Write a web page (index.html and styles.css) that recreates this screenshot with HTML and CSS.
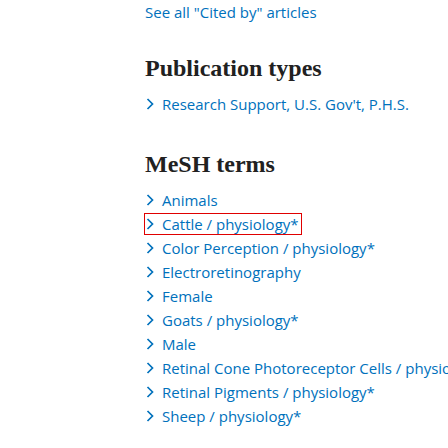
FILE: index.html
```html
<!DOCTYPE html>
<html>
<head>
<meta charset="utf-8">
<link rel="stylesheet" href="styles.css">
</head>
<body>
<div class="page">
  <a class="see-all" href="#">See all "Cited by" articles</a>
  <section class="sec sec-first">
    <h2 class="title">Publication types</h2>
    <ul class="terms">
      <li><svg class="chev" viewBox="0 0 8 12"><polyline points="1.5,1 6.5,6 1.5,11"/></svg><a href="#">Research Support, U.S. Gov't, P.H.S.</a></li>
    </ul>
  </section>
  <section class="sec">
    <h2 class="title">MeSH terms</h2>
    <ul class="terms">
      <li><svg class="chev" viewBox="0 0 8 12"><polyline points="1.5,1 6.5,6 1.5,11"/></svg><a href="#">Animals</a></li>
      <li class="focus"><svg class="chev" viewBox="0 0 8 12"><polyline points="1.5,1 6.5,6 1.5,11"/></svg><a href="#">Cattle / physiology*</a></li>
      <li><svg class="chev" viewBox="0 0 8 12"><polyline points="1.5,1 6.5,6 1.5,11"/></svg><a href="#">Color Perception / physiology*</a></li>
      <li><svg class="chev" viewBox="0 0 8 12"><polyline points="1.5,1 6.5,6 1.5,11"/></svg><a href="#">Electroretinography</a></li>
      <li><svg class="chev" viewBox="0 0 8 12"><polyline points="1.5,1 6.5,6 1.5,11"/></svg><a href="#">Female</a></li>
      <li><svg class="chev" viewBox="0 0 8 12"><polyline points="1.5,1 6.5,6 1.5,11"/></svg><a href="#">Goats / physiology*</a></li>
      <li><svg class="chev" viewBox="0 0 8 12"><polyline points="1.5,1 6.5,6 1.5,11"/></svg><a href="#">Male</a></li>
      <li><svg class="chev" viewBox="0 0 8 12"><polyline points="1.5,1 6.5,6 1.5,11"/></svg><a href="#">Retinal Cone Photoreceptor Cells / physiology*</a></li>
      <li><svg class="chev" viewBox="0 0 8 12"><polyline points="1.5,1 6.5,6 1.5,11"/></svg><a href="#">Retinal Pigments / physiology*</a></li>
      <li><svg class="chev" viewBox="0 0 8 12"><polyline points="1.5,1 6.5,6 1.5,11"/></svg><a href="#">Sheep / physiology*</a></li>
    </ul>
  </section>
</div>
</body>
</html>
```
FILE: styles.css
```css
html, body {
  margin: 0;
  padding: 0;
  background: #ffffff;
  overflow: hidden;
}
.page {
  padding-left: 145px;
  width: 448px;
  box-sizing: border-box;
  font-family: "Open Sans", "Noto Sans", sans-serif;
  font-size: 15px;
  line-height: 24px;
  color: #0071bc;
  white-space: nowrap;
}
a {
  color: #0071bc;
  text-decoration: none;
}
.see-all {
  display: block;
}
.sec {
  margin-top: 33px;
}
.sec-first {
  margin-top: 29px;
}
.title {
  margin: 0 0 9px;
  font-family: "Liberation Serif", serif;
  font-weight: bold;
  font-size: 24px;
  line-height: 30px;
  color: #212121;
}
.terms {
  list-style: none;
  margin: 0;
  padding: 0;
}
.terms li {
  display: flex;
  align-items: center;
  gap: 8px;
  height: 24px;
  width: max-content;
}
.chev {
  width: 8px;
  height: 12px;
  margin-left: 1px;
  fill: none;
  stroke: #0071bc;
  stroke-width: 1.7;
}
.focus {
  position: relative;
}
.focus::after {
  content: "";
  position: absolute;
  top: 1px;
  left: -1px;
  right: -3px;
  height: 22px;
  box-sizing: border-box;
  border: 1px solid #e00000;
}
```
